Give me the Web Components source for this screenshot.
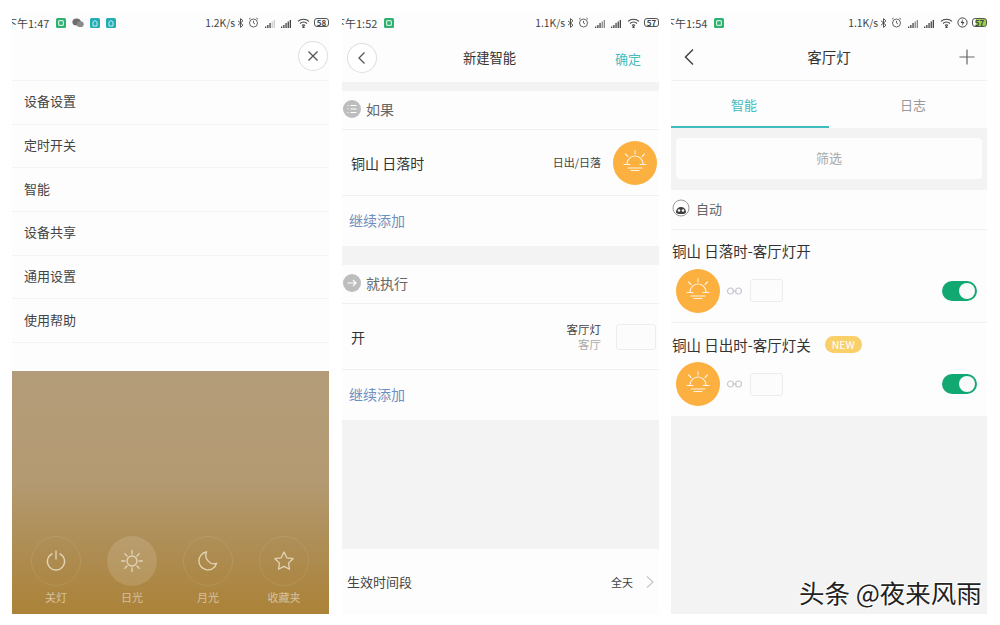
<!DOCTYPE html>
<html lang="zh">
<head>
<meta charset="utf-8">
<title>智能</title>
<style>
  html, body { margin: 0; padding: 0; background: #fff; }
  body { width: 1000px; height: 625px; overflow: hidden; position: relative;
    font-family: "Noto Sans CJK SC", "Noto Sans", sans-serif; color: #3a3a3a; }
  .page { display: flex; padding: 13px 0 0 12px; }
  .page x-phone + x-phone { margin-left: 13px; }
  .page x-phone:last-child { margin-left: 12px; width: 316px; }
</style>
</head>
<body>
<div class="page">
  <!-- premier ecran : menu -->
  <x-phone>
    <x-status time="1:47" shift="-6" speed="1.2K/s" battery="58" notif="green,chat,teal,teal"></x-status>
    <x-head h="44"><span></span><x-round-btn slot="right" kind="close"></x-round-btn></x-head>
    <x-menu-row>设备设置</x-menu-row>
    <x-menu-row>定时开关</x-menu-row>
    <x-menu-row>智能</x-menu-row>
    <x-menu-row>设备共享</x-menu-row>
    <x-menu-row>通用设置</x-menu-row>
    <x-menu-row>使用帮助</x-menu-row>
    <x-spacer h="28"></x-spacer>
    <x-lamp></x-lamp>
  </x-phone>

  <!-- deuxieme ecran : nouveau scenario -->
  <x-phone>
    <x-status time="1:52" shift="-8" speed="1.1K/s" battery="57" notif="green"></x-status>
    <x-head h="46"><x-round-btn slot="left" kind="back"></x-round-btn><span style="font-size:13.3px;margin-right:22px;display:block">新建智能</span><span slot="right" style="color:#45bcc0;font-size:13px;margin-right:18px">确定</span></x-head>
    <x-spacer h="9" gray></x-spacer>
    <x-section icon="list">如果</x-section>
    <x-rule-row h="66" label="铜山 日落时"><x-sub>日出/日落</x-sub><x-sun style="margin-left:12px;margin-right:2px"></x-sun></x-rule-row>
    <x-add h="50">继续添加</x-add>
    <x-spacer h="19" gray></x-spacer>
    <x-section icon="arrow">就执行</x-section>
    <x-rule-row h="66" label="开"><x-sub two="客厅">客厅灯</x-sub><x-thumb style="width:40px;height:26px;margin-left:15px;margin-right:3px"></x-thumb></x-rule-row>
    <x-add h="50">继续添加</x-add>
    <x-spacer h="129" gray></x-spacer>
    <x-time-row></x-time-row>
  </x-phone>

  <!-- troisieme ecran : liste -->
  <x-phone>
    <x-status time="1:54" shift="-7" speed="1.1K/s" battery="57" notif="green" charge></x-status>
    <x-head h="45" line><x-round-btn slot="left" kind="chevron"></x-round-btn><span style="font-size:14.5px">客厅灯</span><x-round-btn slot="right" kind="plus"></x-round-btn></x-head>
    <x-tabs></x-tabs>
    <x-filter>筛选</x-filter>
    <x-section icon="robot" narrow>自动</x-section>
    <x-auto-row label="铜山 日落时-客厅灯开"></x-auto-row>
    <x-auto-row label="铜山 日出时-客厅灯关" new></x-auto-row>
    <x-spacer h="198" gray></x-spacer>
  </x-phone>
</div>
<x-mark>头条 @夜来风雨</x-mark>

<script>
/*///////////////////////helpers////////////////////////*/

const FONT = `"Noto Sans CJK SC", "Noto Sans", sans-serif`;

// petit raccourci : shadow root ouvert + style + markup
function mount(el, css, html) {
  const root = el.attachShadow({ mode: "open" });
  root.innerHTML = `<style>${css}</style>${html}`;
  return root;
}

const NOTIF = {
  green: `<svg width="10" height="10" viewBox="0 0 10 10"><rect width="10" height="10" rx="1.5" fill="#2fb26f"/><rect x="2.6" y="2.6" width="4.8" height="4.8" rx="1" fill="none" stroke="#cfeedd" stroke-width="1.2"/></svg>`,
  teal: `<svg width="10" height="10" viewBox="0 0 10 10"><rect width="10" height="10" rx="1.5" fill="#23aeb4"/><path d="M3 8V4l2-1.5L7 4v4z" fill="none" stroke="#c6ecee" stroke-width="1"/></svg>`,
  chat: `<svg width="12" height="10" viewBox="0 0 12 10"><ellipse cx="4.6" cy="4" rx="4.2" ry="3.5" fill="#6d6d6d"/><ellipse cx="8.3" cy="6.2" rx="3.4" ry="2.9" fill="#8a8a8a"/></svg>`,
};

/*///////////////////////structure////////////////////////*/

class XPhone extends HTMLElement {
  constructor() {
    super();
    mount(this, `:host{display:flex;flex-direction:column;width:317px;height:601px;background:#fdfdfd;overflow:hidden}`, `<slot></slot>`);
  }
}

class XSpacer extends HTMLElement {
  constructor() {
    super();
    const h = this.getAttribute("h");
    const bg = this.hasAttribute("gray") ? "#f3f3f3" : "transparent";
    mount(this, `:host{display:block;flex:none;height:${h}px;background:${bg}}`, ``);
  }
}

/*///////////////////////status bar////////////////////////*/

class XStatus extends HTMLElement {
  constructor() {
    super();
    const notif = (this.getAttribute("notif") || "").split(",").map((n) => NOTIF[n]).join("");
    const charge = this.hasAttribute("charge");
    const bars = (w) => `<svg width="10" height="8" viewBox="0 0 10 8"><g fill="#444"><rect x="0" y="6.500" width="1.300" height="1.500"/><rect x="2.200" y="5" width="1.300" height="3"/><rect x="4.400" y="3" width="1.300" height="5"/></g><g fill="${w}"><rect x="6.600" y="1.500" width="1.300" height="6.500"/><rect x="8.700" y="0" width="1.300" height="8"/></g></svg>`;
    mount(this, `
      :host{display:flex;flex:none;align-items:center;box-sizing:border-box;height:23px;padding-bottom:4px;overflow:hidden;font:11px ${FONT};color:#444;white-space:nowrap;background:#fdfdfd}
      .time{margin-left:${this.getAttribute("shift")}px;margin-right:7px;font-size:11px}
      .notif{display:flex;align-items:center;gap:6px}
      .right{margin-left:auto;display:flex;align-items:center}
      .right > *{flex:none}
      .speed{font-size:10.3px;margin-right:2px}
      .bt{margin-right:4px}
      .al{margin-right:6px}
      .s{margin-right:6px}
      .w{margin-right:4px}
      .ch{margin-right:4px}
      .bat{display:inline-flex;align-items:center;justify-content:center;width:15px;height:9px;border:1px solid #555;border-radius:3px;font-size:8px;line-height:9px;font-weight:700;box-sizing:border-box;${charge ? "background:linear-gradient(90deg,transparent 20%,#9ed04a 20%);" : ""}}
    `, `
      <span class="time">下午${this.getAttribute("time")}</span>
      <span class="notif">${notif}</span>
      <span class="right">
        <span class="speed">${this.getAttribute("speed")}</span>
        <svg class="bt" width="7" height="10" viewBox="0 0 7 10" fill="none" stroke="#444" stroke-width="0.9"><path d="M1 2.800l5 4.400L3.500 9.400V.6L6 2.800 1 7.200"/></svg>
        <svg class="al" width="11" height="11" viewBox="0 0 11 11" fill="none" stroke="#555" stroke-width="0.9"><circle cx="5.500" cy="6" r="4"/><path d="M5.500 3.800V6l1.500 1M1 2.200L2.600 1M10 2.200L8.400 1"/></svg>
        <span class="s">${bars(this.getAttribute("battery") === "58" ? "#ccc" : "#888")}</span>
        <span class="s">${bars("#444")}</span>
        <svg class="w" width="13" height="10" viewBox="0 0 13 10" fill="none" stroke="#444" stroke-width="1.100"><path d="M1 3.400a8 8 0 0 1 11 0M3 5.500a5 5 0 0 1 7 0M5 7.500a2.200 2.200 0 0 1 3 0"/><circle cx="6.500" cy="9.200" r=".6" fill="#444"/></svg>
        ${charge ? `<svg class="ch" width="11" height="11" viewBox="0 0 11 11"><circle cx="5.500" cy="5.500" r="4.600" fill="none" stroke="#444"/><path d="M6 2L3.600 6h1.800L5 9l2.400-4H5.600z" fill="#444"/></svg>` : ""}
        <span class="bat">${this.getAttribute("battery")}</span>
      </span>`);
  }
}

/*///////////////////////header////////////////////////*/

class XHead extends HTMLElement {
  constructor() {
    super();
    const line = this.hasAttribute("line") ? "border-bottom:1px solid #f1f1f1;" : "";
    mount(this, `
      :host{display:grid;flex:none;grid-template-columns:1fr auto 1fr;align-items:center;box-sizing:border-box;height:${this.getAttribute("h")}px;padding-bottom:2px;font:13px ${FONT};color:#333;${line}}
      .l{display:flex;justify-content:flex-start}
      .c{padding-bottom:2px}
      .r{display:flex;justify-content:flex-end}
    `, `<div class="l"><slot name="left"></slot></div><div class="c"><slot></slot></div><div class="r"><slot name="right"></slot></div>`);
  }
}

class XRoundBtn extends HTMLElement {
  constructor() {
    super();
    const kind = this.getAttribute("kind");
    const icons = {
      close: `<path d="M9.500 9.500l9 9M18.500 9.500l-9 9" stroke="#555" stroke-width="1.300"/>`,
      back: `<path d="M16.500 8.500L11 14l5.500 5.500" stroke="#555" stroke-width="1.300" fill="none"/>`,
      chevron: `<path d="M18 6.500L10.500 14l7.500 7.500" stroke="#444" stroke-width="1.500" fill="none"/>`,
      plus: `<path d="M14 6.500v15M6.500 14h15" stroke="#666" stroke-width="1.200"/>`,
    };
    const ring = kind === "close" || kind === "back";
    const margin = { close: "0 2px 2px 0", back: "0 0 0 6px", chevron: "0 0 0 4px", plus: "0 6px 0 0" }[kind];
    mount(this, `
      :host{display:block;width:28px;height:28px;margin:${margin};border-radius:50%;box-sizing:border-box;${ring ? "box-shadow:0 0 0 1px #dedede;background:#fff;" : ""}}
      svg{display:block}
    `, `<svg width="28" height="28" viewBox="0 0 28 28">${icons[kind]}</svg>`);
  }
}

/*///////////////////////ecran 1////////////////////////*/

class XMenuRow extends HTMLElement {
  constructor() {
    super();
    mount(this, `:host{display:flex;flex:none;align-items:center;box-sizing:border-box;height:43.7px;padding:0 0 3px 12px;border-top:1px solid #f3f3f3;font:13px ${FONT};color:#444}
      :host(:last-of-type){border-bottom:1px solid #f3f3f3;height:44.7px}`, `<slot></slot>`);
  }
}

class XLamp extends HTMLElement {
  constructor() {
    super();
    const stroke = `fill="none" stroke="#e3d4b8" stroke-width="1.300" stroke-linecap="round"`;
    let rays = "";
    for (let i = 0; i < 8; i++) {
      const a = (i * Math.PI) / 4;
      rays += `<path d="M${12 + 7 * Math.cos(a)} ${12 + 7 * Math.sin(a)}L${12 + 10.4 * Math.cos(a)} ${12 + 10.4 * Math.sin(a)}"/>`;
    }
    const modes = [
      ["关灯", `<path d="M8 4.800a8.600 8.600 0 1 0 8 0M12 2v8"/>`, false],
      ["日光", `<circle cx="12" cy="12" r="5"/>${rays}`, true],
      ["月光", `<path d="M10.500 3a9 9 0 1 0 10 11.500A8.500 8.500 0 0 1 10.500 3z"/>`, false],
      ["收藏夹", `<path d="M12 3l2.800 5.800 6.200.9-4.500 4.400 1 6.200L12 17.400l-5.500 2.900 1-6.200L3 9.700l6.200-.9z" stroke-linejoin="round"/>`, false],
    ];
    mount(this, `
      :host{flex:1;display:grid;grid-template-columns:repeat(4,76px);padding:0 6px 9px;align-content:end;
        background:linear-gradient(#b39c79,#b39a72 45%,#ad8a4c 80%,#ab8238 100%)}
      .m{display:flex;flex-direction:column;align-items:center;font:11px ${FONT};color:rgba(255,255,255,.5)}
      .c{width:50px;height:50px;border-radius:50%;box-sizing:border-box;border:1px solid rgba(255,255,255,.09);display:flex;align-items:center;justify-content:center;margin-bottom:3px}
      .c.on{background:rgba(255,255,255,.13);border:0}
    `, modes.map(([t, d, on]) => `<div class="m"><div class="c${on ? " on" : ""}"><svg width="24" height="24" viewBox="0 0 24 24" ${stroke}>${d}</svg></div><span>${t}</span></div>`).join(""));
  }
}

/*///////////////////////ecran 2////////////////////////*/

class XSection extends HTMLElement {
  constructor() {
    super();
    const icon = this.getAttribute("icon");
    const glyph = {
      list: `<circle cx="9" cy="9" r="9" fill="#bdbdbd"/><path d="M7.500 5.500h6M7.500 9h6M7.500 12.500h6M4.500 5.500h1M4.500 9h1M4.500 12.500h1" stroke="#fff" stroke-width="1.200"/>`,
      arrow: `<circle cx="9" cy="9" r="9" fill="#bdbdbd"/><path d="M4.500 9h8.500M10 6l3 3-3 3" stroke="#fff" stroke-width="1.200" fill="none"/>`,
      robot: `<circle cx="9" cy="9" r="8" fill="#fff" stroke="#999"/><path d="M4 13a5 5 0 0 1 10 0c0 1.600-1.500 2-5 2s-5-.4-5-2z" fill="#3e3e3e"/><circle cx="7" cy="11.500" r="1.300" fill="#fff"/><circle cx="11" cy="11.500" r="1.300" fill="#fff"/>`,
    }[icon];
    const narrow = this.hasAttribute("narrow");
    mount(this, `
      :host{display:flex;flex:none;align-items:center;gap:${narrow ? 6 : 5}px;box-sizing:border-box;height:${narrow ? 39.5 : 39}px;padding:0 0 2px 1px;border-bottom:1px solid #f1f1f1;font:${narrow ? 13 : 14}px ${FONT};color:#666}
      svg{display:block}
    `, `<svg width="18" height="18" viewBox="0 0 18 18">${glyph}</svg><slot></slot>`);
  }
}

class XRuleRow extends HTMLElement {
  constructor() {
    super();
    mount(this, `
      :host{display:flex;flex:none;align-items:center;box-sizing:border-box;height:${this.getAttribute("h")}px;padding-left:9px;border-bottom:1px solid #f1f1f1;font:14px ${FONT};color:#333}
      .r{margin-left:auto;display:flex;align-items:center}
    `, `<span>${this.getAttribute("label")}</span><div class="r"><slot></slot></div>`);
  }
}

class XSub extends HTMLElement {
  constructor() {
    super();
    const two = this.getAttribute("two");
    mount(this, `
      :host{display:flex;flex-direction:column;align-items:flex-end;font:${two ? 11.5 : 11}px/15px ${FONT};color:#444}
      .t{color:#aaa}
    `, `<span><slot></slot></span>${two ? `<span class="t">${two}</span>` : ""}`);
  }
}

class XSun extends HTMLElement {
  constructor() {
    super();
    mount(this, `:host{display:block;flex:none;width:44px;height:44px;border-radius:50%;background:#fbb03f}svg{display:block}`, `
      <svg width="44" height="44" viewBox="0 0 44 44" fill="none" stroke="#fff" stroke-width="1.100" stroke-linecap="round" opacity=".85">
        <path d="M14 23a8 8 0 0 1 16 0M11 23.500h6M27 23.500h6M15 27h14M18 29.500h8M22 9.500V13M12.500 13l2.500 2.500M31.500 13L29 15.500"/>
      </svg>`);
  }
}

class XThumb extends HTMLElement {
  constructor() {
    super();
    mount(this, `:host{display:block;flex:none;box-sizing:border-box;border:1px solid #ececec;border-radius:3px;background:#fcfcfc}`, ``);
  }
}

class XAdd extends HTMLElement {
  constructor() {
    super();
    mount(this, `:host{display:flex;flex:none;align-items:center;box-sizing:border-box;height:${this.getAttribute("h")}px;padding:0 0 2px 7px;font:14px ${FONT};color:#6d8fc1}`, `<slot></slot>`);
  }
}

class XTimeRow extends HTMLElement {
  constructor() {
    super();
    mount(this, `
      :host{display:flex;flex:1;align-items:center;padding:0 4px 0 5px;font:13px ${FONT};color:#444}
      .v{margin-left:auto;font-size:11px;margin-right:12px}
      svg{display:block}
    `, `<span>生效时间段</span><span class="v">全天</span>
      <svg width="10" height="14" viewBox="0 0 10 14" fill="none" stroke="#c4c4c4" stroke-width="1.100"><path d="M2 1.500L8 7l-6 5.500"/></svg>`);
  }
}

/*///////////////////////ecran 3////////////////////////*/

class XTabs extends HTMLElement {
  constructor() {
    super();
    mount(this, `
      :host{display:grid;flex:none;grid-template-columns:1fr 1fr;height:47px;font:13px ${FONT}}
      div{display:flex;align-items:center;justify-content:center;box-sizing:border-box;color:#999;padding-left:10px}
      .on{color:#45bcc0;border-bottom:2px solid #3fbcc0;padding:2px 12px 0 0}
    `, `<div class="on">智能</div><div>日志</div>`);
  }
}

class XFilter extends HTMLElement {
  constructor() {
    super();
    mount(this, `
      :host{display:block;flex:none;background:#f3f3f3;padding:10px 5px 11px}
      div{display:flex;align-items:center;justify-content:center;box-sizing:border-box;height:41px;padding-bottom:2px;background:#fdfdfd;border-radius:4px;font:13px ${FONT};color:#aaa}
    `, `<div><slot></slot></div>`);
  }
}

class XAutoRow extends HTMLElement {
  constructor() {
    super();
    const badge = this.hasAttribute("new") ? `<span class="new">NEW</span>` : "";
    mount(this, `
      :host{display:block;flex:none;box-sizing:border-box;height:93.5px;padding:10px 10px 0 1px;border-bottom:1px solid #f1f1f1}
      .t{display:flex;align-items:center;height:22px;font:14.5px ${FONT};color:#333}
      .new{margin-left:14px;padding:0 7px;height:17px;line-height:17px;border-radius:9px;background:#f9cf6a;color:#fff;font-size:10.5px}
      .b{display:flex;align-items:center;margin:7px 0 0 4px}
      svg{display:block;margin:0 7px 0 6px}
      x-toggle{margin-left:auto}
    `, `<div class="t"><span>${this.getAttribute("label")}</span>${badge}</div>
      <div class="b"><x-sun></x-sun>
        <svg width="17" height="8" viewBox="0 0 17 8" fill="none" stroke="#c6c8d2" stroke-width="1.200"><circle cx="4.500" cy="4" r="3"/><circle cx="12.500" cy="4" r="3"/><path d="M6.500 4h4"/></svg>
        <x-thumb style="width:33px;height:23px"></x-thumb><x-toggle></x-toggle></div>`);
  }
}

class XToggle extends HTMLElement {
  constructor() {
    super();
    mount(this, `
      :host{display:flex;align-items:center;justify-content:flex-end;box-sizing:border-box;width:35px;height:20px;padding:0 2px;border-radius:10px;background:#12a871}
      i{display:block;width:16px;height:16px;border-radius:50%;background:#fafafa}
    `, `<i></i>`);
  }
}

/*///////////////////////filigrane////////////////////////*/

class XMark extends HTMLElement {
  constructor() {
    super();
    // posé par dessus l'ecran
    mount(this, `:host{position:absolute;left:799px;top:575px;font:25.5px/34px ${FONT};color:#222;white-space:nowrap;text-shadow:1px 1px 0 #fff,-1px -1px 0 #fff}`, `<slot></slot>`);
  }
}

const elements = {
  "x-phone": XPhone, "x-spacer": XSpacer, "x-status": XStatus, "x-head": XHead,
  "x-round-btn": XRoundBtn, "x-menu-row": XMenuRow, "x-lamp": XLamp, "x-section": XSection,
  "x-rule-row": XRuleRow, "x-sub": XSub, "x-sun": XSun, "x-thumb": XThumb, "x-add": XAdd,
  "x-time-row": XTimeRow, "x-tabs": XTabs, "x-filter": XFilter, "x-auto-row": XAutoRow,
  "x-toggle": XToggle, "x-mark": XMark,
};
Object.keys(elements).forEach((name) => customElements.define(name, elements[name]));
</script>
</body>
</html>
